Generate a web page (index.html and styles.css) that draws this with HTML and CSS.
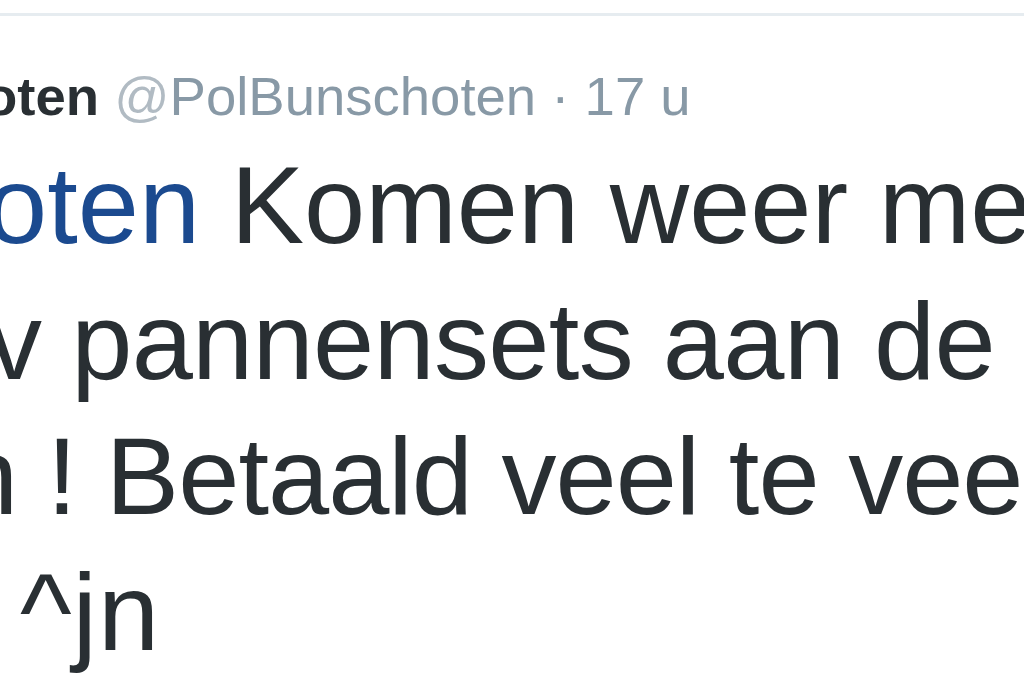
FILE: index.html
```html
<!DOCTYPE html>
<html lang="nl">
<head>
<meta charset="utf-8">
<title>Tweet</title>
<link rel="stylesheet" href="styles.css">
</head>
<body>
<div class="page">
  <div class="rule"></div>
  <div class="tweet">
    <div class="header"><span class="name">oten</span> <span class="handle"><span class="at">@</span>PolBunschoten</span> <span class="time">· 17 u</span></div>
    <div class="text">
      <div class="line l1"><span class="mention">oten</span> Komen weer met</div>
      <div class="line l2">v pannensets aan de</div>
      <div class="line l3">n ! Betaald veel te veel</div>
      <div class="line l4">^jn</div>
    </div>
  </div>
</div>
</body>
</html>
```
FILE: styles.css
```css
html, body {
  margin: 0;
  padding: 0;
  background: #ffffff;
  overflow: hidden;
}
.page {
  width: 1024px;
  height: 683px;
  overflow: hidden;
  padding-top: 13px;
  box-sizing: border-box;
  font-family: "Liberation Sans", Arial, sans-serif;
  color: #292f33;
}
.rule {
  height: 3px;
  background: #e6ecf0;
}
.tweet {
  margin-top: 51px;
}
.header {
  font-size: 54.5px;
  line-height: 60px;
  white-space: nowrap;
  text-indent: -16px;
  color: #8899a6;
}
.name {
  font-weight: bold;
  color: #292f33;
}
.at {
  color: #b1bbc3;
}
.text {
  margin-top: 10px;
  font-size: 110px;
  line-height: 135.5px;
}
.line {
  white-space: nowrap;
}
.mention {
  color: #1b4a8f;
}
.l1 { text-indent: -14px; }
.l2 { text-indent: -13px; letter-spacing: -0.7px; }
.l3 { text-indent: -43px; letter-spacing: -1px; }
.l4 { text-indent: 20px; letter-spacing: 1px; }
```
